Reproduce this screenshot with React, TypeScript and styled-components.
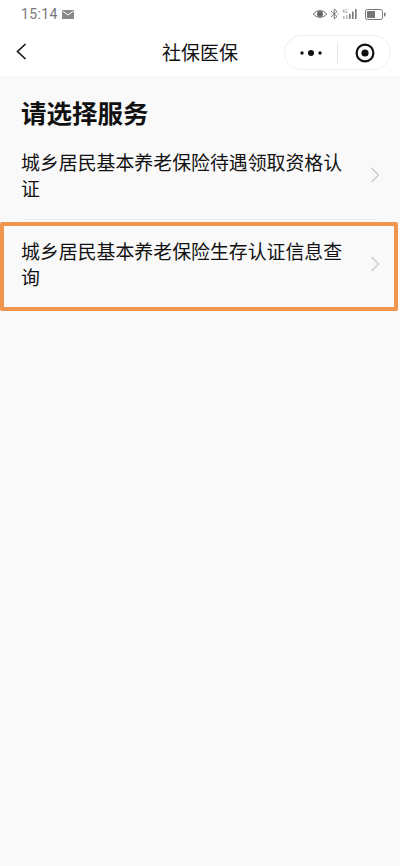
import React from 'react';
import styled, { createGlobalStyle } from 'styled-components';

const services = [
  { name: '城乡居民基本养老保险待遇领取资格认证', highlighted: false },
  { name: '城乡居民基本养老保险生存认证信息查询', highlighted: true },
];

function App() {
  return (
    <Page>
      <GlobalStyle />
      <StatusBar>
        <StatusLeft>
          <Time>15:14</Time>
          <svg width="12" height="9" viewBox="0 0 12 9">
            <rect width="12" height="9" fill="#8a8a8a" />
            <path d="M0.5 1 L6 5 L11.5 1" fill="none" stroke="#fff" strokeWidth="1" />
          </svg>
        </StatusLeft>
        <StatusRight>
          <svg width="14" height="10" viewBox="0 0 14 10">
            <path d="M0.5 5 C3 0.6 11 0.6 13.5 5 C11 9.4 3 9.4 0.5 5 Z" fill="none" stroke="#666" strokeWidth="1" />
            <circle cx="7" cy="5" r="3" fill="#666" />
          </svg>
          <svg width="9" height="12" viewBox="0 0 9 12">
            <path d="M1 3 L7 8.5 L4.2 11 V1 L7 3.5 L1 9" fill="none" stroke="#777" strokeWidth="1" />
            <circle cx="1" cy="6" r="0.6" fill="#777" />
            <circle cx="8" cy="6" r="0.6" fill="#777" />
          </svg>
          <SignalIcon width="18" height="12" viewBox="0 0 18 12">
            <text x="0" y="4.5" fontSize="4.5" fill="#999" fontFamily="Roboto, sans-serif">4G</text>
            <rect x="1" y="8" width="1.6" height="3" fill="#bbb" />
            <rect x="4" y="7" width="1.6" height="4" fill="#bbb" />
            <rect x="7" y="6" width="1.6" height="5" fill="#777" />
            <rect x="10" y="3.5" width="1.6" height="7.5" fill="#777" />
            <rect x="13" y="1" width="1.6" height="10" fill="#777" />
          </SignalIcon>
          <svg width="21" height="11" viewBox="0 0 21 11">
            <rect x="0.5" y="0.5" width="17" height="10" rx="2" fill="none" stroke="#777" strokeWidth="1" />
            <rect x="2" y="2" width="8" height="7" rx="0.5" fill="#777" />
            <rect x="19" y="3.5" width="1.5" height="4" rx="0.7" fill="#777" />
          </svg>
        </StatusRight>
      </StatusBar>
      <NavBar>
        <BackButton>
          <svg width="12" height="20" viewBox="0 0 12 20">
            <path d="M10.5 2 L2.5 9.5 L10.5 17" fill="none" stroke="#111" strokeWidth="1.6" />
          </svg>
        </BackButton>
        <NavTitle>社保医保</NavTitle>
        <Capsule>
          <CapsuleSide>
            <svg width="22" height="8" viewBox="0 0 22 8">
              <circle cx="2" cy="4" r="1.7" fill="#111" />
              <circle cx="11" cy="4" r="3" fill="#111" />
              <circle cx="20" cy="4" r="1.7" fill="#111" />
            </svg>
          </CapsuleSide>
          <CapsuleDivider />
          <CapsuleSide>
            <TargetIcon width="20" height="20" viewBox="0 0 20 20">
              <circle cx="10" cy="10" r="8.4" fill="none" stroke="#111" strokeWidth="2.2" />
              <circle cx="10" cy="10" r="3.6" fill="#111" />
            </TargetIcon>
          </CapsuleSide>
        </Capsule>
      </NavBar>
      <Content>
        <Heading>请选择服务</Heading>
        <ServiceList>
          {services.map((service) => (
            <ServiceRow key={service.name} $highlighted={service.highlighted}>
              <ServiceName>{service.name}</ServiceName>
              <svg width="10" height="16" viewBox="0 0 10 16">
                <path d="M1.5 1 L8.5 8 L1.5 15" fill="none" stroke="#c8c8c8" strokeWidth="1.2" />
              </svg>
            </ServiceRow>
          ))}
        </ServiceList>
      </Content>
    </Page>
  );
}

const GlobalStyle = createGlobalStyle`
  html, body {
    margin: 0;
    padding: 0;
    background: #f9f9f9;
  }
  * {
    box-sizing: border-box;
  }
`;
const Page = styled.div`
  width: 400px;
  height: 866px;
  display: flex;
  flex-direction: column;
  overflow: hidden;
  background: #f9f9f9;
  font-family: "Noto Sans CJK SC", "Liberation Sans", sans-serif;
`;
const StatusBar = styled.div`
  height: 28px;
  padding: 0 14px 0 21px;
  display: flex;
  justify-content: space-between;
  align-items: center;
  background: #fff;
`;
const StatusLeft = styled.div`
  display: flex;
  align-items: center;
  gap: 4px;
`;
const Time = styled.span`
  font-family: Roboto, "Liberation Sans", sans-serif;
  font-size: 14px;
  letter-spacing: 0.4px;
  color: #777;
`;
const StatusRight = styled.div`
  display: flex;
  align-items: center;
  gap: 3px;
`;
const SignalIcon = styled.svg`
  margin-right: 2px;
`;
const NavBar = styled.div`
  position: relative;
  height: 48px;
  padding: 0 9px 0 15px;
  display: flex;
  justify-content: space-between;
  align-items: center;
  background: #fff;
`;
const BackButton = styled.div`
  display: flex;
  align-items: center;
`;
const NavTitle = styled.div`
  position: absolute;
  left: 0;
  right: 0;
  text-align: center;
  font-size: 19px;
  line-height: 26px;
  color: #111;
`;
const Capsule = styled.div`
  position: relative;
  width: 107px;
  height: 35px;
  margin-top: 1px;
  display: flex;
  align-items: center;
  border: 1px solid #eeeeee;
  border-radius: 18px;
  background: #fff;
`;
const CapsuleSide = styled.div`
  flex: 1;
  display: flex;
  justify-content: center;
  align-items: center;
`;
const TargetIcon = styled.svg`
  margin-left: 2px;
`;
const CapsuleDivider = styled.div`
  width: 1px;
  height: 20px;
  background: #e4e4e4;
`;
const Content = styled.div`
  flex: 1;
  display: flex;
  flex-direction: column;
`;
const Heading = styled.h1`
  margin: 0;
  padding: 18px 21px 0;
  height: 55px;
  font-size: 25.5px;
  line-height: 36px;
  font-weight: 700;
  color: #111;
`;
const ServiceList = styled.div`
  display: flex;
  flex-direction: column;
`;
const ServiceRow = styled.div<{ $highlighted: boolean }>`
  position: relative;
  height: 89px;
  padding: 0 20px 2px 21px;
  display: flex;
  justify-content: space-between;
  align-items: center;
  &::before {
    content: "";
    display: ${(props) => (props.$highlighted ? 'none' : 'block')};
    position: absolute;
    left: 22px;
    right: 22px;
    bottom: 0;
    height: 1px;
    background: #eeeeee;
  }
  &::after {
    content: "";
    display: ${(props) => (props.$highlighted ? 'block' : 'none')};
    position: absolute;
    left: 0;
    right: 2px;
    top: 2px;
    bottom: -2px;
    border: 4px solid #f0954d;
    border-radius: 2px;
  }
`;
const ServiceName = styled.div`
  width: 322px;
  font-size: 18.9px;
  line-height: 26px;
  color: #111;
`;

export default App;
